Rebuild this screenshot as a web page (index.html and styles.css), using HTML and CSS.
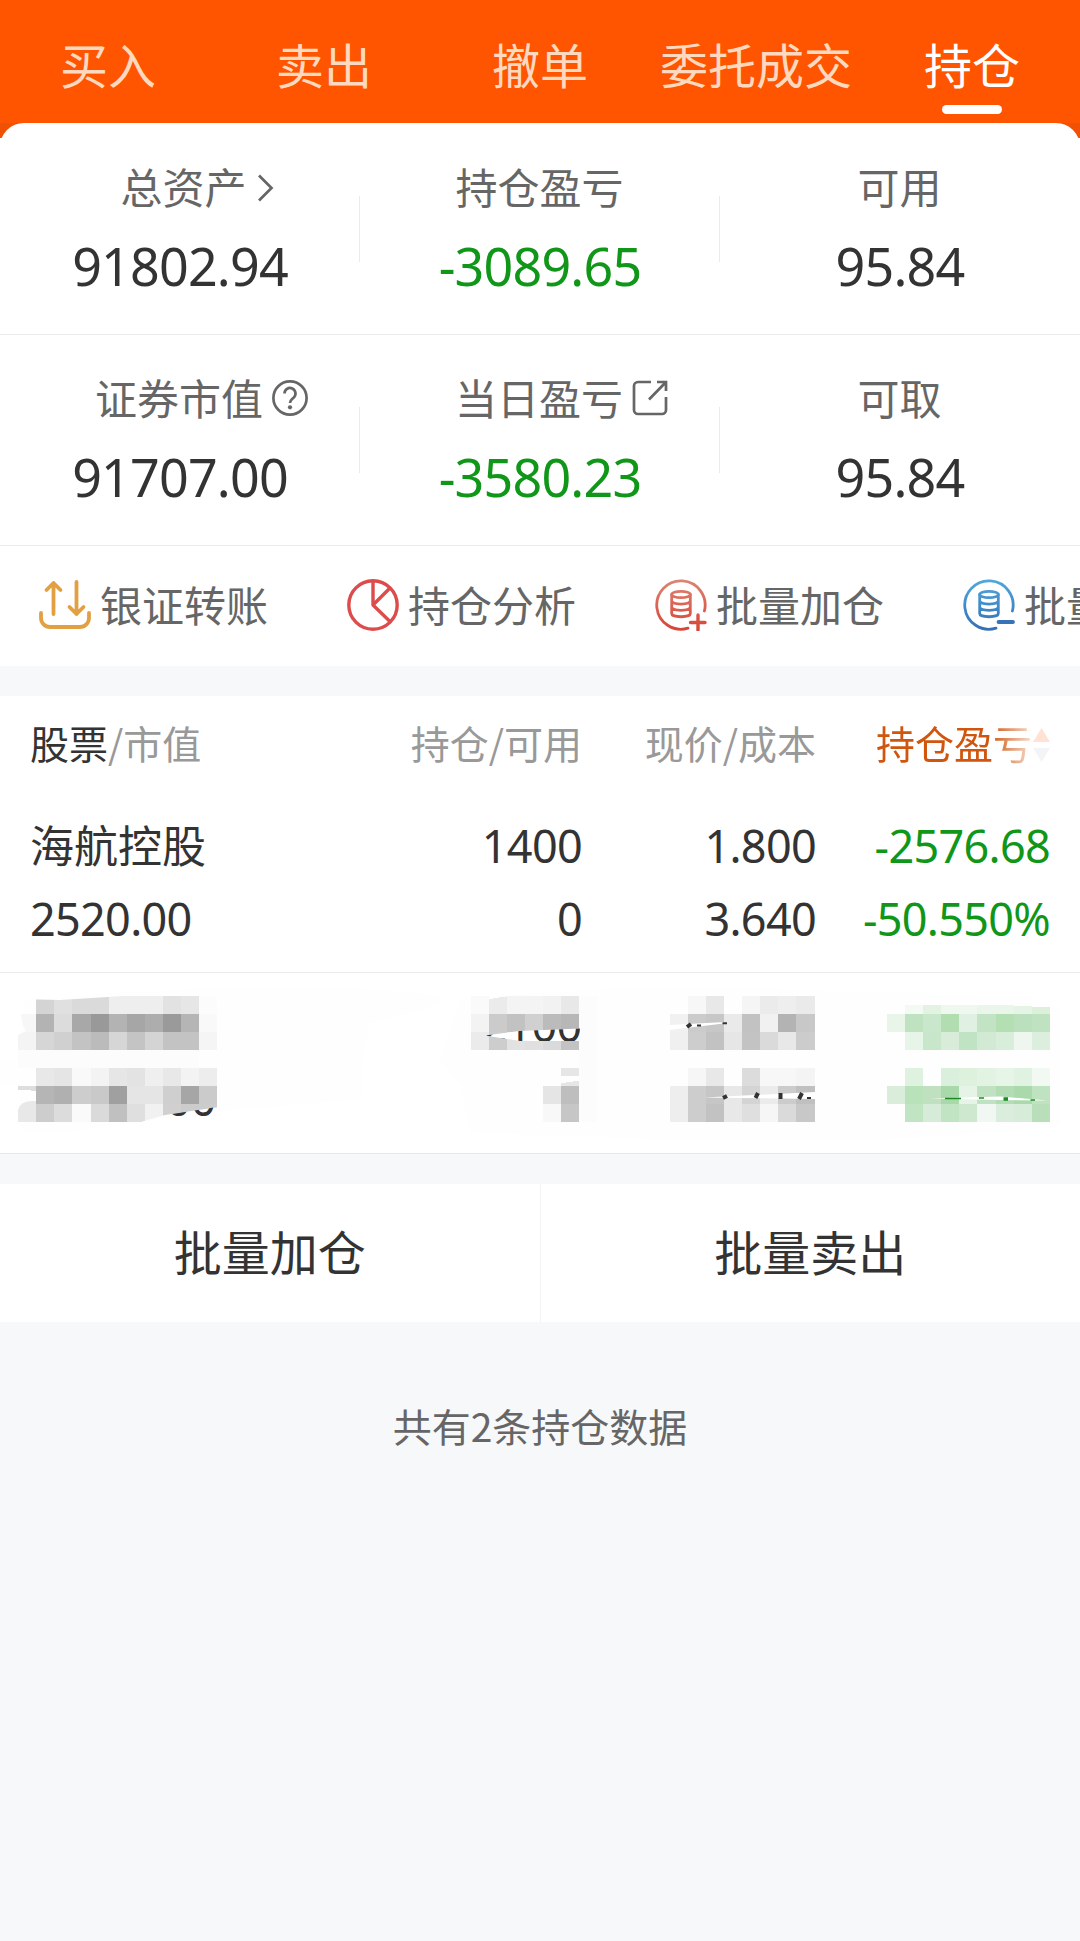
FILE: index.html
```html
<!DOCTYPE html>
<html lang="zh-CN">
<head>
<meta charset="utf-8">
<title>持仓</title>
<link rel="stylesheet" href="styles.css">
</head>
<body>
<nav class="tabs">
  <a class="tab">买入</a>
  <a class="tab">卖出</a>
  <a class="tab">撤单</a>
  <a class="tab tab-wide">委托成交</a>
  <a class="tab tab-active">持仓</a>
</nav>

<div class="card-wrap">
<section class="card">
  <div class="metrics">
    <div class="metric">
      <div class="label label-link">总资产<svg class="chevron" width="17" height="28" viewBox="0 0 17 28"><path d="M2 1.5 14.5 14 2 26.500"/></svg></div>
      <div class="value">91802.94</div>
    </div>
    <div class="metric">
      <div class="label">持仓盈亏</div>
      <div class="value down">-3089.65</div>
    </div>
    <div class="metric">
      <div class="label">可用</div>
      <div class="value">95.84</div>
    </div>
  </div>
  <div class="metrics">
    <div class="metric">
      <div class="label">证券市值<svg class="hint" width="36" height="36" viewBox="0 0 36 36"><circle cx="18" cy="18" r="16.600"/><path d="M12.500 13.500a5.500 5.500 0 1 1 9.300 4c-2 1.800-3.800 2.500-3.800 5.500"/><circle class="dot" cx="18" cy="27.300" r="2.100"/></svg></div>
      <div class="value">91707.00</div>
    </div>
    <div class="metric">
      <div class="label">当日盈亏<svg class="hint" width="36" height="36" viewBox="0 0 36 36"><path d="M19 2H6a4 4 0 0 0-4 4v24a4 4 0 0 0 4 4h24a4 4 0 0 0 4-4V17M25 2h9v9M34 2 17 19.500"/></svg></div>
      <div class="value down">-3580.23</div>
    </div>
    <div class="metric">
      <div class="label">可取</div>
      <div class="value">95.84</div>
    </div>
  </div>
  <div class="actions">
    <div class="action">
      <svg class="icon transfer" viewBox="0 0 52 52"><path d="M2 34v5a9 9 0 0 0 9 9h30a9 9 0 0 0 9-9v-5M14.500 35V4M7.500 11l7-7 7 7M37.500 3v32M30.500 28l7 7 7-7"/></svg>
      <span>银证转账</span>
    </div>
    <div class="action">
      <svg class="icon analysis" viewBox="0 0 52 52"><circle cx="26" cy="26" r="24.200"/><path d="M26 2v24l16.500-16.500M26 26l17 16.500"/></svg>
      <span>持仓分析</span>
    </div>
    <div class="action">
      <svg class="icon" viewBox="0 0 52 52">
        <defs><linearGradient id="red" gradientUnits="userSpaceOnUse" x1="0" y1="0" x2="0" y2="52"><stop offset="0" stop-color="#dc8674"/><stop offset="1" stop-color="#d84335"/></linearGradient></defs>
        <g fill="none" stroke="url(#red)" stroke-width="2.800" stroke-linecap="round"><path d="M33 49.200A24.200 24.200 0 1 1 49.400 32"/><ellipse cx="26" cy="15.500" rx="9.300" ry="3.200"/><path d="M16.700 15.500v19c0 4.300 18.600 4.300 18.600 0v-19M16.700 21.800c0 4.300 18.600 4.300 18.600 0M16.700 28.100c0 4.300 18.600 4.300 18.600 0"/><path stroke-width="3.400" d="M35.500 43.500H50M43 36v15"/></g>
      </svg>
      <span>批量加仓</span>
    </div>
    <div class="action">
      <svg class="icon" viewBox="0 0 52 52">
        <defs><linearGradient id="blue" gradientUnits="userSpaceOnUse" x1="0" y1="0" x2="0" y2="52"><stop offset="0" stop-color="#4fa9dc"/><stop offset="1" stop-color="#356fb5"/></linearGradient></defs>
        <g fill="none" stroke="url(#blue)" stroke-width="2.800" stroke-linecap="round"><path d="M33 49.200A24.200 24.200 0 1 1 49.400 32"/><ellipse cx="26" cy="15.500" rx="9.300" ry="3.200"/><path d="M16.700 15.500v19c0 4.300 18.600 4.300 18.600 0v-19M16.700 21.800c0 4.300 18.600 4.300 18.600 0M16.700 28.100c0 4.300 18.600 4.300 18.600 0"/></g><path d="M35.500 43H50" stroke="#3873b8" stroke-width="3.800" stroke-linecap="round"/>
      </svg>
      <span>批量</span>
    </div>
  </div>
</section>
</div>

<section class="holdings">
  <div class="grid head">
    <div class="name"><b>股票</b>/市值</div>
    <div>持仓/可用</div>
    <div>现价/成本</div>
    <div class="sort"><span>持仓盈亏</span><svg width="17" height="34" viewBox="0 0 17 34"><path fill="#ff5500" d="M8.500 0 17 14H0z"/><path fill="#b9bcc4" d="M8.500 34 17 20H0z"/></svg></div>
  </div>
  <div class="grid row">
    <div class="name">海航控股</div><div class="num">1400</div><div class="num">1.800</div><div class="num down">-2576.68</div>
    <div class="num amount">2520.00</div><div class="num">0</div><div class="num">3.640</div><div class="num down">-50.550%</div>
  </div>
  <!-- second holding, hidden behind a privacy mosaic -->
  <svg class="masked" width="1080" height="180" viewBox="0 973 1080 180">
    <defs>
      <clipPath id="cutAmount"><path d="M150 1119L172 1114 217 1107V1122H150z"/></clipPath>
      <clipPath id="cutQty"><path d="M485 1035.500 519 1031 580 1028.500V1041H520z"/></clipPath>
      <clipPath id="left"><path d="M21 1004Q25 999 36 999.500L60 1000 108 997 130 995.500H220V1107Q190 1111 165 1115L140 1122.200H18V1110Q20 1101 33 1101L31 1090H18V1035L26 1031Q20 1022 21 1004z"/></clipPath>
    </defs>
    <path fill="#fefefe" d="M25 1000Q180 985 350 989T370 1022L362 1060 362 1100Q230 1108 140 1122T20 1130V1086H0V1060H18zM460 1000Q580 985 760 989L1030 996 1060 1010V1125Q900 1145 690 1140L470 1133 460 1085 440 1060z"/>
    <g clip-path="url(#left)"><g transform="scale(18.100)" shape-rendering="crispEdges">
      <path fill="#d4d4d4" d="M2 55h1v1h-1z"/><path fill="#e0e0e0" d="M3 55h1v1h-1z"/><path fill="#dadada" d="M4 55h2v1h-2z"/><path fill="#eee" d="M6 55h3v1h-3z"/><path fill="#e2e2e2" d="M9 55h1v1h-1z"/><path fill="#e6e6e6" d="M10 55h1v1h-1z"/><path fill="#fcfcfc" d="M11 55h1v1h-1z"/>
      <path fill="#f7f7f7" d="M1 56h1v1h-1z"/><path fill="#b3b3b3" d="M2 56h1v1h-1z"/><path fill="#dcdcdc" d="M3 56h1v1h-1z"/><path fill="#a8a8a8" d="M4 56h1v1h-1z"/><path fill="#999" d="M5 56h1v1h-1z"/><path fill="#b3b3b3" d="M6 56h1v1h-1z"/><path fill="#a6a6a6" d="M7 56h1v1h-1z"/><path fill="#adadad" d="M8 56h1v1h-1z"/><path fill="#9a9a9a" d="M9 56h1v1h-1z"/><path fill="#b5b5b5" d="M10 56h1v1h-1z"/><path fill="#f9f9f9" d="M11 56h1v1h-1z"/>
      <path fill="#f4f4f4" d="M1 57h1v1h-1z"/><path fill="#d6d6d6" d="M2 57h1v1h-1z"/><path fill="#d0d0d0" d="M3 57h1v1h-1z"/><path fill="#c3c3c3" d="M4 57h1v1h-1z"/><path fill="#bbb" d="M5 57h1v1h-1z"/><path fill="#d6d6d6" d="M6 57h1v1h-1z"/><path fill="#c4c4c4" d="M7 57h1v1h-1z"/><path fill="#d4d4d4" d="M8 57h1v1h-1z"/><path fill="#c3c3c3" d="M9 57h2v1h-2z"/><path fill="#f5f5f5" d="M11 57h1v1h-1z"/>
      <path fill="#fcfcfc" d="M1 58h10v1h-10z"/>
      <path fill="#e8e8e8" d="M2 59h1v1h-1z"/><path fill="#e5e5e5" d="M3 59h1v1h-1z"/><path fill="#f9f9f9" d="M4 59h1v1h-1z"/><path fill="#f3f3f3" d="M5 59h1v1h-1z"/><path fill="#e6e6e6" d="M6 59h1v1h-1z"/><path fill="#e3e3e3" d="M7 59h1v1h-1z"/><path fill="#efefef" d="M8 59h1v1h-1z"/><path fill="#e8e8e8" d="M9 59h1v1h-1z"/><path fill="#f3f3f3" d="M10 59h1v1h-1z"/><path fill="#ededed" d="M11 59h1v1h-1z"/>
      <path fill="#ddd" d="M1 60h1v.25h-1z"/><path fill="#b5b5b5" d="M2 60h1v1h-1z"/><path fill="#b0b0b0" d="M3 60h1v1h-1z"/><path fill="#cdcdcd" d="M4 60h1v1h-1z"/><path fill="#c9c9c9" d="M5 60h1v1h-1z"/><path fill="#a0a0a0" d="M6 60h1v1h-1z"/><path fill="#e5e5e5" d="M7 60h2v1h-2z"/><path fill="#cfcfcf" d="M9 60h1v1h-1z"/><path fill="#a6a6a6" d="M10 60h1v1h-1z"/><path fill="#cbcbcb" d="M11 60h1v1h-1z"/>
      <path fill="#e8e8e8" d="M1 60.850h1v1.150h-1z"/><path fill="#cdcdcd" d="M2 61h1v1h-1z"/><path fill="#dcdcdc" d="M3 61h1v1h-1z"/><path fill="#fafafa" d="M4 61h1v1h-1z"/><path fill="#dadada" d="M5 61h1v1h-1z"/><path fill="#c0c0c0" d="M6 61h1v1h-1z"/><path fill="#dfdfdf" d="M7 61h1v1h-1z"/><path fill="#f1f1f1" d="M8 61h1v1h-1z"/><path fill="#d0d0d0" d="M9 61h1v1h-1z"/><path fill="#ccc" d="M10 61h2v1h-2z"/>
    </g></g>
    <g transform="scale(18.100)" shape-rendering="crispEdges">
      <path fill="#fafafa" d="M26 55h1v1h-1z"/><path fill="#ebebeb" d="M27 55.200l1-.15v1h-1z"/><path fill="#f4f4f4" d="M28 55h2v1h-2z"/><path fill="#f2f2f2" d="M30 55h1v1h-1z"/><path fill="#e8e8e8" d="M31 55h1v1h-1z"/>
      <path fill="#f3f3f3" d="M26 56h1v1h-1z"/><path fill="#cbcbcb" d="M27 56h1v1h-1z"/><path fill="#c2c2c2" d="M28 56h1v1h-1z"/><path fill="#d0d0d0" d="M29 56h1v1h-1z"/><path fill="#bbb" d="M30 56h1v1h-1z"/><path fill="#b7b7b7" d="M31 56h1v1h-1z"/><path fill="#fcfcfc" d="M32 55h1v7h-1z"/>
      <path fill="#ebebeb" d="M26 57h1v1h-1z"/><path fill="#cdcdcd" d="M27 57h1v1h-1z"/><path fill="#e2e2e2" d="M28 57h1v1h-1z"/><path fill="#e0e0e0" d="M29 57h1v1h-1z"/><path fill="#dadada" d="M30 57h1v1h-1z"/><path fill="#c3c3c3" d="M31 57h1v1h-1z"/>
      <path fill="#e6e6e6" d="M31 59h1v.45h-1zM31 59.850l1-.15v.3h-1z"/><path fill="#e5e5e5" d="M30 60h1v1h-1z"/><path fill="#bebebe" d="M31 60h1v1h-1z"/><path fill="#f8f8f8" d="M30 61h1v1h-1z"/><path fill="#c6c6c6" d="M31 61h1v1h-1z"/>
      <path fill="#f7f7f7" d="M38 55h1v1h-1z"/><path fill="#e8e8e8" d="M39 55h1v1h-1z"/><path fill="#f5f5f5" d="M41 55h1v1h-1z"/><path fill="#ebebeb" d="M42 55h1v1h-1z"/><path fill="#eee" d="M43 55h1v1h-1z"/><path fill="#eaeaea" d="M44 55h1v1h-1z"/>
      <path fill="#f1f1f1" d="M37 56h1v1h-1z"/><path fill="#cbcbcb" d="M38 56h1v1h-1z"/><path fill="#c7c7c7" d="M39 56h1v1h-1z"/><path fill="#eaeaea" d="M40 56h1v1h-1z"/><path fill="#c2c2c2" d="M41 56h1v1h-1z"/><path fill="#f1f1f1" d="M42 56h1v1h-1z"/><path fill="#b3b3b3" d="M43 56h1v1h-1z"/><path fill="#c8c8c8" d="M44 56h1v1h-1z"/>
      <path fill="#f0f0f0" d="M37 57h1v1h-1z"/><path fill="#cdcdcd" d="M38 57h1v1h-1z"/><path fill="#c2c2c2" d="M39 57h1v1h-1z"/><path fill="#e6e6e6" d="M40 57h1v1h-1z"/><path fill="#c3c3c3" d="M41 57h1v1h-1z"/><path fill="#dadada" d="M42 57h1v1h-1z"/><path fill="#e8e8e8" d="M43 57h1v1h-1z"/><path fill="#ccc" d="M44 57h1v1h-1z"/>
      <path fill="#f6f6f6" d="M38 59h1v1h-1z"/><path fill="#e8e8e8" d="M39 59h1v1h-1z"/><path fill="#dcdcdc" d="M41 59h1v1h-1z"/><path fill="#f7f7f7" d="M42 59h2v1h-2z"/><path fill="#f4f4f4" d="M44 59h1v1h-1z"/>
      <path fill="#eee" d="M37 60h1v2h-1z"/><path fill="#cdcdcd" d="M38 60h1v2h-1z"/><path fill="#c6c6c6" d="M39 60h1v1h-1z"/><path fill="#e8e8e8" d="M40 60h1v2h-1z"/><path fill="#d4d4d4" d="M41 60h1v1h-1z"/><path fill="#ebebeb" d="M42 60h1v1h-1z"/><path fill="#ccc" d="M43 60h1v1h-1z"/><path fill="#c0c0c0" d="M44 60h1v1h-1z"/>
      <path fill="#c2c2c2" d="M39 61h1v1h-1z"/><path fill="#dfdfdf" d="M41 61h1v1h-1z"/><path fill="#f6f6f6" d="M42 61h1v1h-1z"/><path fill="#dadada" d="M43 61h1v1h-1z"/><path fill="#c8c8c8" d="M44 61h1v1h-1z"/>
      <path fill="#f3faf3" d="M50 55.550h1v.45h-1z"/><path fill="#e2f3e2" d="M51 55.550h1v.45h-1z"/><path fill="#eef8ee" d="M52 55.550h2v.45h-2z"/><path fill="#ebf6eb" d="M54 55.550h2v.45h-2z"/><path fill="#e6f4e6" d="M56 55.600h1v.4h-1z"/><path fill="#dcf0dc" d="M57 55.650h1v.35h-1z"/>
      <path fill="#e8f5e8" d="M49 56h1v1h-1z"/><path fill="#bfe2c0" d="M50 56h1v1h-1z"/><path fill="#c9e7ca" d="M51 56h1v1h-1z"/><path fill="#b1ddb1" d="M52 56h1v1h-1z"/><path fill="#e0f0e2" d="M53 56h1v1h-1z"/><path fill="#c3e3c5" d="M54 56h1v1h-1z"/><path fill="#b3dfb2" d="M55 56h1v1h-1z"/><path fill="#bbe0bd" d="M56 56h1v1h-1z"/><path fill="#bfe2c1" d="M57 56h1v1h-1z"/>
      <path fill="#e7f5e8" d="M50 57h1v1h-1z"/><path fill="#c7e6ca" d="M51 57h1v1h-1z"/><path fill="#d8ecd9" d="M52 57h1v1h-1z"/><path fill="#c0e4c3" d="M53 57h1v1h-1z"/><path fill="#d2e9d4" d="M54 57h1v1h-1z"/><path fill="#d8eedb" d="M55 57h1v1h-1z"/><path fill="#eef6ef" d="M56 57h1v1h-1z"/><path fill="#dceedd" d="M57 57h1v1h-1z"/>
      <path fill="#dff2e0" d="M50 59h1v1h-1z"/><path fill="#daf0dc" d="M52 59h1v1h-1z"/><path fill="#ddf1dd" d="M53 59h1v1h-1z"/><path fill="#e2f2e3" d="M54 59h1v1h-1z"/><path fill="#e7f5e9" d="M55 59h1v1h-1z"/><path fill="#e0f2e2" d="M56 59h1v1h-1z"/><path fill="#f1f9f2" d="M57 59h1v1h-1z"/>
      <path fill="#d9edda" d="M49 60h1v1h-1z"/><path fill="#b9e2bb" d="M50 60h1v1h-1z"/><path fill="#bfe1c0" d="M51 60h1v1h-1z"/><path fill="#a9d8aa" d="M52 60h1v1h-1z"/><path fill="#e6f3e7" d="M53 60h1v1h-1z"/><path fill="#c0e2c2" d="M54 60h1v1h-1z"/><path fill="#b3dcb5" d="M55 60h1v1h-1z"/><path fill="#aad9ab" d="M56 60h1v1h-1z"/><path fill="#bfe2c0" d="M57 60h1v1h-1z"/>
      <path fill="#c1e4c2" d="M50 61h1v1h-1z"/><path fill="#d6ebd8" d="M51 61h1v1h-1z"/><path fill="#c1e4c2" d="M52 61h1v1h-1z"/><path fill="#cde8cf" d="M53 61h1v1h-1z"/><path fill="#f1f7f2" d="M54 61h1v1h-1z"/><path fill="#dbeedd" d="M55 61h1v1h-1z"/><path fill="#d8ecda" d="M56 61h1v1h-1z"/><path fill="#b8dfba" d="M57 61h1v1h-1z"/>
    </g>
    <!-- strips that the mosaic missed -->
    <path fill="#fff" d="M485 1035.500 519 1031 580 1028.500V1041H520zM669 1025 725 1022 728 1023 669 1030zM704 1097.500 815 1092V1099L740 1098zM930 1098.500 1000 1096.500 1048 1100.500 1000 1100z"/>
    <g clip-path="url(#cutAmount)"><text class="leak" x="215.500" y="1115.500">00</text></g>
    <g clip-path="url(#cutQty)"><text class="leak" x="581.500" y="1041.500">2100</text></g>
    <path fill="none" stroke="#333" stroke-width="4" d="M687 1027l4-3M723 1098l4-2M755.500 1098l2.500-5M780.500 1093v6M799 1099l3-6"/>
    <path fill="none" stroke="#333" stroke-width="2" d="M697 1025.500h4M722.500 1023.300h4.500M807 1098h4"/>
    <path fill="none" stroke="#1a8a22" stroke-width="1.600" d="M945 1098.500h16M979 1098h5M1030.500 1100h4.500"/><path stroke="#1a8a22" stroke-width="3.500" d="M1003.500 1099h4.500"/>
  </svg>
</section>

<section class="bulk">
  <a>批量加仓</a>
  <a>批量卖出</a>
</section>
<p class="total">共有2条持仓数据</p>
</body>
</html>
```
FILE: styles.css
```css
* { box-sizing: border-box; }
body {
  margin: 0;
  min-height: 1941px;
  overflow-x: hidden;
  background: #f7f8fa;
  color: #333;
  font-family: "Noto Sans CJK SC", sans-serif;
}
.tabs {
  display: flex;
  height: 123px;
  background: #f50;
}
.tab {
  width: 216px;
  padding-top: 27px;
  text-align: center;
  font-size: 48px;
  line-height: 72px;
  color: #ffd9bf;
}
.tab-active { color: #fff; }
.tab-active::after {
  content: "";
  display: block;
  width: 60px;
  height: 9px;
  margin: 6px auto 0;
  border-radius: 5px;
  background: #fff;
}
.card-wrap { background: linear-gradient(#f15104 15px, #fff 15px); }
.card {
  padding-top: 1px;
  border-radius: 24px 24px 0 0;
  background: #fff;
  overflow: hidden;
}
.metrics {
  display: grid;
  grid-template-columns: repeat(3, 1fr);
  height: 211px;
  border-bottom: 1px solid #ebebeb;
}
.metric {
  display: flex;
  flex-direction: column;
  align-items: center;
  gap: 15px;
  padding-top: 32px;
  background: linear-gradient(#ebebeb, #ebebeb) right 72px / 1px 66px no-repeat;
}
.metric:last-child { background: none; }
.label {
  display: flex;
  align-items: center;
  height: 60px;
  margin-left: -1px;
  font-size: 42px;
  line-height: 60px;
  color: #666;
}
.label-link { padding-left: 8px; }
.label svg { fill: none; stroke: #666; stroke-width: 2.7; }
.chevron { margin: 3px -27px 0 10px; }
.hint { margin: 2px -44px 0 9px; }
.hint .dot { fill: #666; stroke: none; }
.value, .num, .leak { font-family: "Noto Sans", "Noto Sans CJK SC", sans-serif; }
.value { font-size: 52px; line-height: 70px; letter-spacing: -.8px; }
.down { color: #109618; }
.actions {
  display: flex;
  height: 120px;
  padding: 0 0 4px 39px;
}
.action {
  display: flex;
  flex: 0 0 308px;
  align-items: center;
  gap: 9px;
  font-size: 42px;
  line-height: 60px;
  color: #666;
  white-space: nowrap;
}
.icon { width: 52px; height: 52px; margin-top: 2px; }
.transfer, .analysis { fill: none; stroke-width: 3.8; stroke-linecap: round; stroke-linejoin: round; }
.transfer { stroke: #e2a043; }
.analysis { stroke: #dd4c4c; stroke-width: 3.4; }
.holdings {
  margin-top: 30px;
  border-bottom: 1px solid #e8e8e8;
  background: #fff;
}
.grid {
  display: grid;
  grid-template-columns: 1fr 251px 234px 234px;
  padding: 0 30px;
  text-align: right;
}
.head {
  height: 92px;
  font-size: 39px;
  line-height: 92px;
  color: #999;
}
.name, .amount { text-align: left; }
.head b { font-weight: 400; color: #333; }
.sort {
  display: flex;
  align-items: center;
  justify-content: flex-end;
  gap: 1px;
  color: #d0560f;
  -webkit-mask-image: linear-gradient(90deg, #000 174px, rgba(0, 0, 0, .17) 217px);
  mask-image: linear-gradient(90deg, #000 174px, rgba(0, 0, 0, .17) 217px);
}
.sort svg { margin-top: 5px; }
.row {
  grid-template-rows: 73px 73px;
  padding-top: 19px;
  padding-bottom: 19px;
  border-bottom: 1px solid #ebebeb;
  line-height: 73px;
}
.row .name { padding-top: 1px; font-size: 44px; }
.num { padding-top: 2px; font-size: 45px; letter-spacing: -.7px; }
.masked { display: block; }
.leak { font-size: 45px; letter-spacing: -.7px; text-anchor: end; fill: #333; }
.bulk {
  display: flex;
  height: 138px;
  margin-top: 30px;
  background: #fff;
}
.bulk a {
  flex: 1;
  font-size: 48px;
  line-height: 133px;
  text-align: center;
}
.bulk a:first-child { border-right: 1px solid #f3f3f3; }
.total {
  margin: 73px 0 0;
  text-align: center;
  font-size: 39px;
  line-height: 60px;
  color: #666;
}
```
